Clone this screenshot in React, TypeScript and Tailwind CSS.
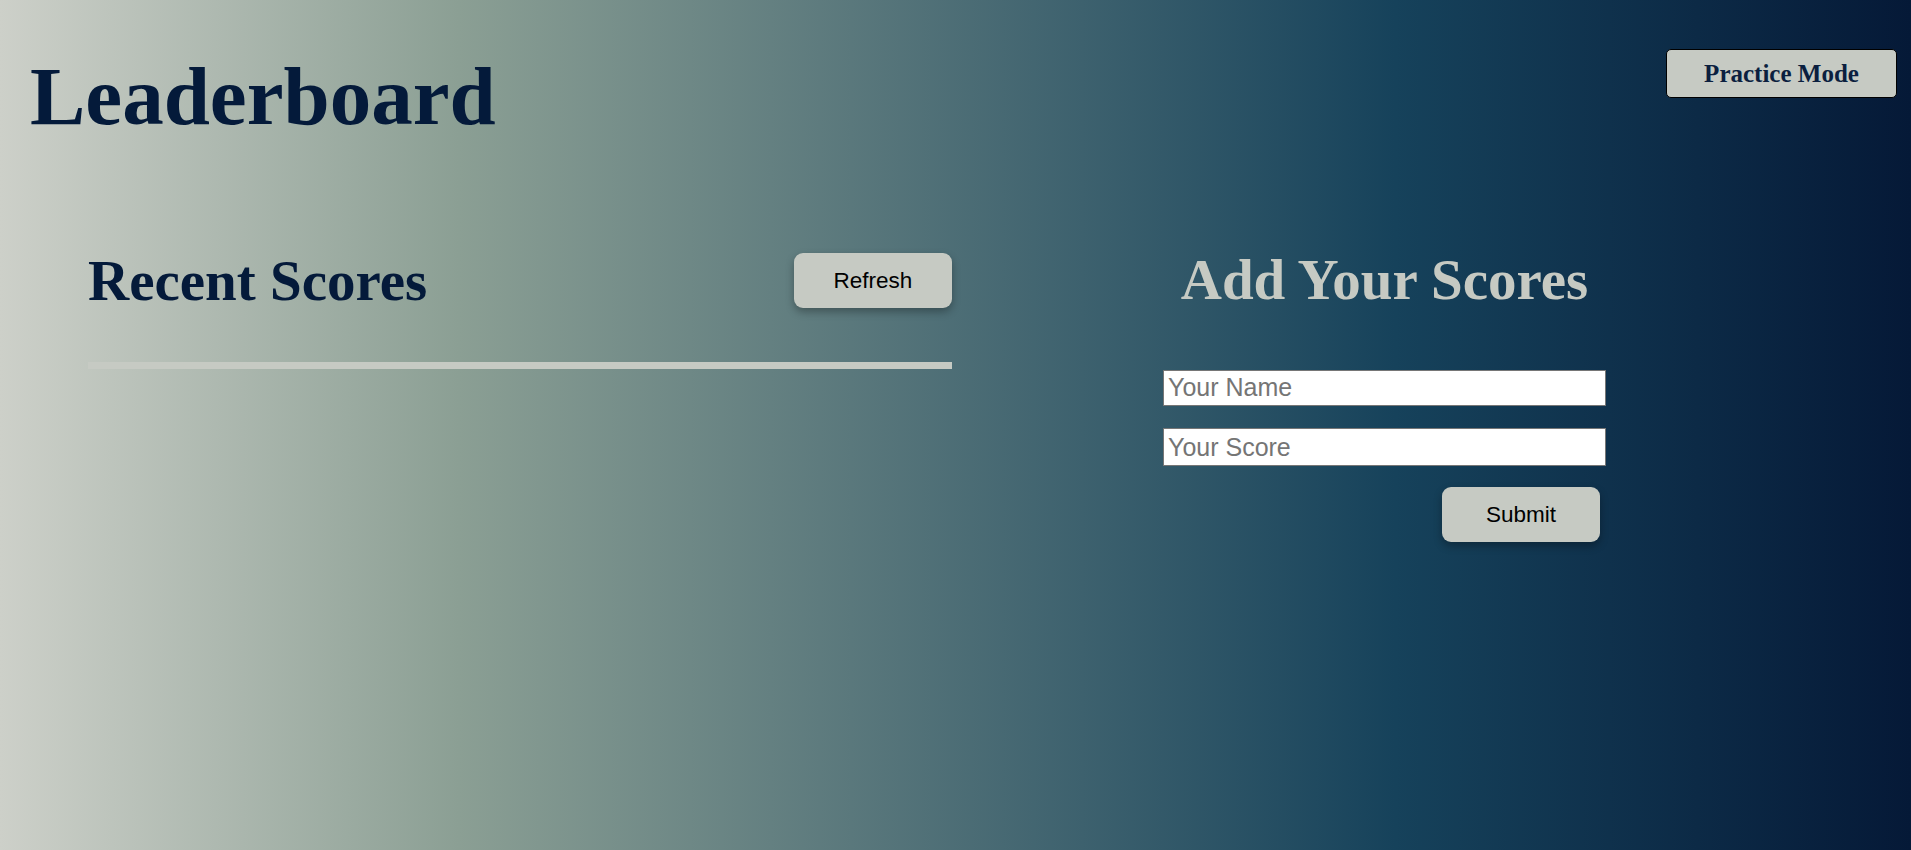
import React from 'react';

const serif = "font-['Liberation_Serif','Times_New_Roman',serif]";
const sans = "font-['Liberation_Sans',Arial,sans-serif]";

const RecentScores: React.FC = () => {
  return (
    <div className="w-[864px]">
      <div className="flex items-center justify-between">
        <h2 className={`${serif} text-[57px] font-bold leading-none text-[#041a3a]`}>Recent Scores</h2>
        <button
          className={`${sans} h-[55px] w-[158px] rounded-[9px] bg-[#c6cac3] text-[22.5px] text-black shadow-[0_4px_8px_rgba(0,0,0,0.3)]`}
        >
          Refresh
        </button>
      </div>
      <div className="mt-[53px] h-[7px] bg-[#c6cac3]" />
    </div>
  );
};

const AddScore: React.FC = () => {
  return (
    <div className="ml-[211px] flex w-[443px] flex-col">
      <h2 className={`${serif} -mt-[1px] text-center text-[57px] font-bold leading-none text-[#c6cac3]`}>Add Your Scores</h2>
      <input
        type="text"
        placeholder="Your Name"
        className={`${sans} mt-[62px] h-[36px] border border-[#767676] bg-white px-[4px] text-[25px] text-black placeholder:text-[#757575]`}
      />
      <input
        type="text"
        placeholder="Your Score"
        className={`${sans} mt-[22px] h-[38px] border border-[#767676] bg-white px-[4px] text-[25px] text-black placeholder:text-[#757575]`}
      />
      <button
        className={`${sans} mr-[6px] mt-[21px] h-[55px] w-[158px] self-end rounded-[9px] bg-[#c6cac3] text-[22.5px] text-black shadow-[0_4px_8px_rgba(0,0,0,0.3)]`}
      >
        Submit
      </button>
    </div>
  );
};

export default function App() {
  return (
    <div className="h-screen w-full overflow-hidden bg-[linear-gradient(to_right,#cdd0c9_0%,#8b9f94_24%,#16425b_73%,#051937_100%)]">
      <header className="flex items-start justify-between pl-[30px] pr-[14px] pt-[49px]">
        <h1 className={`${serif} mt-[6px] text-[83px] font-bold leading-none text-[#041a3a]`}>Leaderboard</h1>
        <button
          className={`${serif} h-[49px] w-[231px] rounded-[5px] border border-black bg-[#c6cac3] text-[25px] font-bold text-[#0b1f3f]`}
        >
          Practice Mode
        </button>
      </header>
      <main className="mt-[114px] flex items-start pl-[88px]">
        <RecentScores />
        <AddScore />
      </main>
    </div>
  );
}
